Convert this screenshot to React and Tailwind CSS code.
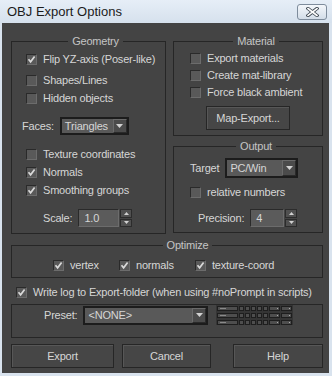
import React from 'react'

const FONT = "font-['Liberation_Sans',Arial,sans-serif]"

function Check({ checked }) {
  return (
    <span className="flex h-[11px] w-[11px] shrink-0 items-center justify-center border border-t-[#2a2a2a] border-l-[#2a2a2a] border-b-[#6c6c6c] border-r-[#6c6c6c] bg-[#595959]">
      {checked && (
        <svg width="9" height="9" viewBox="0 0 9 9">
          <path d="M1.5 4.3 L3.6 6.8 L7.6 1.6" fill="none" stroke="#dadada" strokeWidth="1.7" />
        </svg>
      )}
    </span>
  )
}

function CheckRow({ checked, label, className = '' }) {
  return (
    <div className={`flex h-4 items-center gap-[6px] whitespace-nowrap ${className}`}>
      <Check checked={checked} />
      <span>{label}</span>
    </div>
  )
}

function Arrow() {
  return (
    <svg width="7" height="4" viewBox="0 0 7 4">
      <path d="M0 0h7L3.5 4z" fill="#d2d2d2" />
    </svg>
  )
}

function Select({ value, className = '' }) {
  return (
    <div className={`flex items-stretch border-2 border-[#1c1c1c] bg-[#595959] ${className}`}>
      <span className="flex flex-1 items-center pl-[3px]">{value}</span>
      <span className="flex w-[14px] items-center justify-center border border-t-[#6a6a6a] border-l-[#6a6a6a] border-b-[#2a2a2a] border-r-[#2a2a2a] bg-[#4b4b4b]">
        <Arrow />
      </span>
    </div>
  )
}

function Spinner({ value, width }) {
  return (
    <div className="flex h-[18px]">
      <span className={`flex items-center border border-t-[#2a2a2a] border-l-[#2a2a2a] border-b-[#6c6c6c] border-r-[#6c6c6c] bg-[#5b5b5b] pl-[5px] ${width}`}>
        {value}
      </span>
      <span className="ml-[1px] flex w-[12px] flex-col gap-[1px]">
        <span className="flex flex-1 items-center justify-center border border-[#2c2c2c] bg-[#505050]">
          <svg width="5" height="3" viewBox="0 0 5 3"><path d="M2.5 0L5 3H0z" fill="#d2d2d2" /></svg>
        </span>
        <span className="flex flex-1 items-center justify-center border border-[#2c2c2c] bg-[#505050]">
          <svg width="5" height="3" viewBox="0 0 5 3"><path d="M0 0h5L2.5 3z" fill="#d2d2d2" /></svg>
        </span>
      </span>
    </div>
  )
}

function Group({ title, className = '', children }) {
  return (
    <fieldset className={`border border-[#262626] ${className}`}>
      {title && <legend className="mx-auto px-[4px] leading-[13px] text-[#c4c4c4]">{title}</legend>}
      {children}
    </fieldset>
  )
}

function Button({ label, className = '' }) {
  return (
    <button className={`flex h-[24px] items-center justify-center border border-[#262626] bg-[#464646] shadow-[inset_1px_1px_0_#575757] ${className}`}>
      {label}
    </button>
  )
}

function PresetSlots() {
  const rows = [0, 7, 14]
  return (
    <svg width="77" height="20" viewBox="0 0 77 20">
      <rect x="0" y="0" width="77" height="20" fill="#353535" />
      {rows.map(y => (
        <g key={y}>
          <rect x="1.5" y={y + 1.5} width="20" height="4" fill="#4e4e4e" stroke="#1e1e1e" />
          <rect x="4" y={y + 3} width="6" height="1" fill="#8a8a8a" />
          {[23, 29, 35, 41, 47].map(x => (
            <rect key={x} x={x + 0.5} y={y + 1.5} width="4" height="4" fill="#4e4e4e" stroke="#1e1e1e" />
          ))}
          <rect x="53.5" y={y + 1.5} width="10" height="4" fill="#4e4e4e" stroke="#1e1e1e" />
          <rect x="61" y={y + 3} width="1" height="1" fill="#aaa" />
          <rect x="65.5" y={y + 1.5} width="10" height="4" fill="#4e4e4e" stroke="#1e1e1e" />
          <rect x="73" y={y + 3} width="1" height="1" fill="#aaa" />
        </g>
      ))}
    </svg>
  )
}

export default function App() {
  return (
    <div className={`${FONT} flex h-[376px] w-[332px] flex-col bg-[#d9e3ee] text-[11px] tracking-[-0.2px] text-[#d6d6d6]`}>
      {/* Title bar */}
      <div className="flex h-[23px] shrink-0 items-center justify-between bg-gradient-to-b from-[#e6eef7] to-[#d6e1ed] pl-[7px] pr-[5px]">
        <span className="text-[13px] tracking-normal text-[#1b1b1b]">OBJ Export Options</span>
        <span className="flex h-[16px] w-[30px] items-center justify-center rounded-[3px] border border-[#7e8c9c] bg-gradient-to-b from-[#f4f7fb] to-[#d3dde8]">
          <svg width="13" height="10" viewBox="0 0 13 10">
            <path d="M2 1.5 L11 8.5 M11 1.5 L2 8.5" stroke="#3d4650" strokeWidth="3.4" strokeLinecap="square" />
            <path d="M2 1.5 L11 8.5 M11 1.5 L2 8.5" stroke="#ffffff" strokeWidth="1.6" strokeLinecap="square" />
          </svg>
        </span>
      </div>

      {/* Body */}
      <div className="mx-[2px] mb-[3px] mr-[3px] flex flex-1 flex-col bg-[#444444] pl-[9px] pr-[6px] pt-[12px]">
        <div className="flex gap-[7px]">
          {/* Geometry */}
          <Group title="Geometry" className="h-[199px] w-[155px] pl-[14px]">
            <CheckRow checked label="Flip YZ-axis (Poser-like)" className="mt-[3px]" />
            <CheckRow label="Shapes/Lines" className="mt-[5px]" />
            <CheckRow label="Hidden objects" className="mt-[2px]" />
            <div className="-ml-[4px] mt-[11px] flex h-[18px] items-center gap-[6px]">
              <span>Faces:</span>
              <Select value="Triangles" className="h-[18px] w-[69px]" />
            </div>
            <CheckRow label="Texture coordinates" className="mt-[11px]" />
            <CheckRow checked label="Normals" className="mt-[2px]" />
            <CheckRow checked label="Smoothing groups" className="mt-[2px]" />
            <div className="mt-[11px] flex h-[18px] items-center gap-[6px] pl-[17px]">
              <span>Scale:</span>
              <Spinner value="1.0" width="w-[41px]" />
            </div>
          </Group>

          <div className="flex w-[150px] flex-col">
            {/* Material */}
            <Group title="Material" className="h-[101px] pl-[16px]">
              <CheckRow label="Export materials" className="mt-[2px]" />
              <CheckRow label="Create mat-library" className="mt-[1px]" />
              <CheckRow label="Force black ambient" className="mt-[1px]" />
              <Button label="Map-Export..." className="ml-[16px] mt-[6px] h-[22px] w-[84px]" />
            </Group>

            {/* Output */}
            <Group title="Output" className="mt-[4px] h-[93px] pl-[16px]">
              <div className="mt-[5px] flex h-[20px] items-center gap-[6px]">
                <span>Target</span>
                <Select value="PC/Win" className="h-[20px] w-[73px]" />
              </div>
              <CheckRow label="relative numbers" className="mt-[6px]" />
              <div className="mt-[9px] flex h-[18px] items-center gap-[6px] pl-[8px]">
                <span>Precision:</span>
                <Spinner value="4" width="w-[34px]" />
              </div>
            </Group>
          </div>
        </div>

        {/* Optimize */}
        <Group title="Optimize" className="mt-[5px] h-[39px] pl-[41px]">
          <div className="mt-[5px] flex">
            <CheckRow checked label="vertex" className="w-[66px]" />
            <CheckRow checked label="normals" className="w-[76px]" />
            <CheckRow checked label="texture-coord" />
          </div>
        </Group>

        <CheckRow checked label="Write log to Export-folder (when using #noPrompt in scripts)" className="ml-[5px] mt-[6px] gap-[5px]" />

        {/* Preset */}
        <Group className="mt-[4px] flex h-[34px] items-center pl-[32px]">
          <span>Preset:</span>
          <Select value="<NONE>" className="ml-[6px] h-[19px] w-[125px]" />
          <span className="ml-[8px] flex"><PresetSlots /></span>
        </Group>

        <div className="mt-[6px] flex">
          <Button label="Export" className="w-[103px]" />
          <Button label="Cancel" className="ml-[8px] w-[89px]" />
          <Button label="Help" className="ml-auto w-[90px]" />
        </div>
      </div>
    </div>
  )
}
